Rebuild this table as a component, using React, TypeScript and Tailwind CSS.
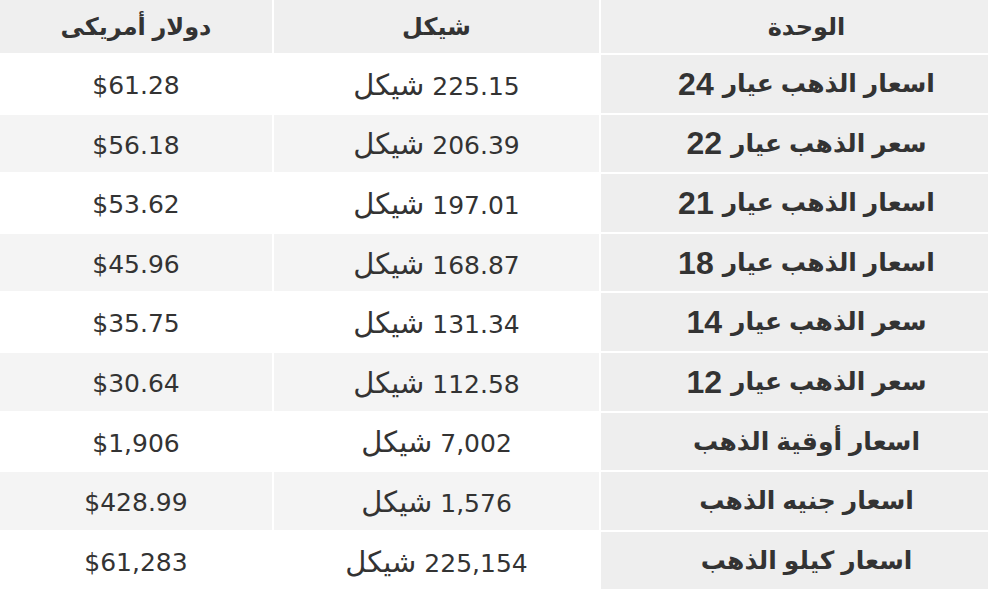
const rows: [string, string, string, string][] = [
  ['اسعار الذهب عيار', '24', '225.15', '$61.28'],
  ['سعر الذهب عيار', '22', '206.39', '$56.18'],
  ['اسعار الذهب عيار', '21', '197.01', '$53.62'],
  ['اسعار الذهب عيار', '18', '168.87', '$45.96'],
  ['سعر الذهب عيار', '14', '131.34', '$35.75'],
  ['سعر الذهب عيار', '12', '112.58', '$30.64'],
  ['اسعار أوقية الذهب', '', '7,002', '$1,906'],
  ['اسعار جنيه الذهب', '', '1,576', '$428.99'],
  ['اسعار كيلو الذهب', '', '225,154', '$61,283'],
];

export default function App() {
  return (
    <div className="h-[602px] w-[988px] overflow-hidden bg-white text-[#333]">
      <div
        dir="rtl"
        className="grid grid-cols-[387px_325px_272px] grid-rows-[53px_repeat(9,57.6px)] gap-[2px]"
      >
        <div className="flex items-center justify-center bg-[#efefef] pl-6 text-[24px] font-bold font-['Liberation_Sans','DejaVu_Sans',sans-serif]">
          الوحدة
        </div>
        <div className="flex items-center justify-center bg-[#efefef] text-[24px] font-bold font-['Liberation_Sans','DejaVu_Sans',sans-serif]">
          شيكل
        </div>
        <div className="flex items-center justify-center bg-[#efefef] text-[24px] font-bold font-['Liberation_Sans','DejaVu_Sans',sans-serif]">
          دولار أمريكى
        </div>
        {rows.map(([unit, karat, ils, usd], i) => {
          const bg = i % 2 === 0 ? 'bg-white' : 'bg-[#f4f4f4]';
          return [
            <div
              key={`u${i}`}
              className="flex items-center justify-center gap-[9px] bg-[#eeeeee] pl-6 text-[25px] font-bold font-['Liberation_Sans','DejaVu_Sans',sans-serif]"
            >
              <span>{unit}</span>
              {karat && <span className="text-[32px] leading-none">{karat}</span>}
            </div>,
            <div
              key={`s${i}`}
              className={`flex items-center justify-center ${bg} pt-[3px] font-['DejaVu_Sans',sans-serif]`}
            >
              <div className="flex items-baseline gap-[8px] text-[25px] leading-none">
                <span dir="ltr">{ils}</span>
                <span className="text-[29px]">شيكل</span>
              </div>
            </div>,
            <div
              key={`d${i}`}
              dir="ltr"
              className={`flex items-center justify-center ${bg} pt-[4px] text-[25px] font-['DejaVu_Sans',sans-serif]`}
            >
              {usd}
            </div>,
          ];
        })}
      </div>
    </div>
  );
}
